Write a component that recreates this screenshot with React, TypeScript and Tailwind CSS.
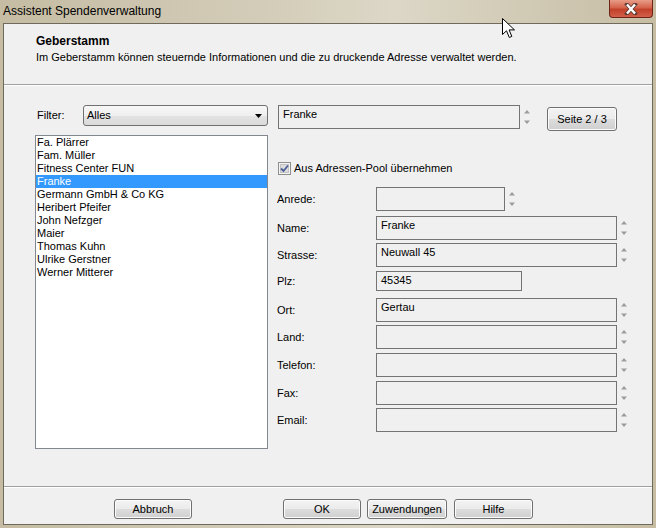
import React from "react";

const clients = [
  "Fa. Plärrer",
  "Fam. Müller",
  "Fitness Center FUN",
  "Franke",
  "Germann GmbH & Co KG",
  "Heribert Pfeifer",
  "John Nefzger",
  "Maier",
  "Thomas Kuhn",
  "Ulrike Gerstner",
  "Werner Mitterer",
];

type Field = {
  label: string;
  value: string;
  width: number;
  height: number;
  gap: number;
  spin: boolean;
};

// gap = space above the box (px)
const fields: Field[] = [
  { label: "Anrede:", value: "", width: 129, height: 24, gap: 12, spin: true },
  { label: "Name:", value: "Franke", width: 241, height: 24, gap: 5, spin: true },
  { label: "Strasse:", value: "Neuwall 45", width: 241, height: 24, gap: 3, spin: true },
  { label: "Plz:", value: "45345", width: 146, height: 20, gap: 4, spin: false },
  { label: "Ort:", value: "Gertau", width: 241, height: 24, gap: 7, spin: true },
  { label: "Land:", value: "", width: 241, height: 24, gap: 3, spin: true },
  { label: "Telefon:", value: "", width: 241, height: 24, gap: 4, spin: true },
  { label: "Fax:", value: "", width: 241, height: 24, gap: 4, spin: true },
  { label: "Email:", value: "", width: 241, height: 24, gap: 3, spin: true },
];

function Spinner() {
  return (
    <svg width="14" height="24" viewBox="0 0 14 24" className="shrink-0">
      <path d="M4 8.5 L7 5 L10 8.5 Z" fill="#9c9c9c" />
      <path d="M4 15.5 L7 19 L10 15.5 Z" fill="#9c9c9c" />
    </svg>
  );
}

function Button({ label, width }: { label: string; width: number }) {
  return (
    <div
      className="flex h-[20px] items-center justify-center rounded-[3px] border border-[#707070] bg-[linear-gradient(#f3f3f3_0%,#ebebeb_49%,#dddddd_50%,#cfcfcf_100%)] shadow-[inset_0_0_0_1px_#fcfcfc]"
      style={{ width }}
    >
      {label}
    </div>
  );
}

function Separator() {
  return (
    <div className="shrink-0">
      <div className="h-px bg-[#a0a0a0]" />
      <div className="h-px bg-white" />
    </div>
  );
}

export default function App() {
  return (
    <div className="relative h-[528px] w-[656px] overflow-hidden bg-[linear-gradient(90deg,#c5bca3_0%,#d3ccb8_40%,#dcd7c7_60%,#c6bda3_100%)] font-['Liberation_Sans',Arial,sans-serif] text-[11px] leading-[13px] text-black">
      {/* title bar */}
      <div className="flex h-[23px] items-center pl-[3px] text-[12px]">
        Assistent Spendenverwaltung
      </div>
      <div className="absolute right-[3px] top-0 flex h-[18px] w-[44px] items-center justify-center rounded-b-[4px] border border-t-0 border-[#6e2418] bg-[linear-gradient(#e79c88_0%,#d5634b_45%,#c2412a_55%,#d1604a_100%)]">
        <svg width="14" height="12" viewBox="0 0 14 12">
          <path
            d="M3 1.5 L11 10.5 M11 1.5 L3 10.5"
            stroke="#5a3a34"
            strokeWidth="4"
            strokeLinecap="square"
            fill="none"
          />
          <path
            d="M3 1.5 L11 10.5 M11 1.5 L3 10.5"
            stroke="#ffffff"
            strokeWidth="2.4"
            fill="none"
          />
        </svg>
      </div>

      {/* client area */}
      <div className="ml-[3px] flex h-[502px] w-[650px] flex-col border border-[#6f6a5c] bg-[#f0f0f0]">
        <div className="h-[60px] shrink-0 pl-[32px] pt-[10px]">
          <div className="text-[12px] font-bold leading-[14px]">Geberstamm</div>
          <div className="mt-[3px]">
            Im Geberstamm können steuernde Informationen und die zu druckende Adresse verwaltet werden.
          </div>
        </div>
        <Separator />

        <div className="flex flex-1 pl-[31px] pt-[19px]">
          {/* left column */}
          <div className="flex w-[233px] flex-col">
            <div className="flex h-[21px] items-center">
              <div className="w-[48px] pl-[2px]">Filter:</div>
              <div className="flex h-[21px] w-[185px] items-center justify-between rounded-[3px] border border-[#707070] bg-[linear-gradient(#f7f7f7_0%,#efefef_50%,#e3e3e3_51%,#dadada_100%)] pl-[3px] pr-[5px]">
                <span>Alles</span>
                <svg width="7" height="4" viewBox="0 0 7 4">
                  <path d="M0 0 H7 L3.5 4 Z" fill="#000" />
                </svg>
              </div>
            </div>
            <div className="mt-[9px] h-[314px] border border-[#828790] bg-white">
              {clients.map((c) => (
                <div
                  key={c}
                  className={
                    c === "Franke"
                      ? "h-[13px] bg-[#3399ff] pl-[1px] text-white"
                      : "h-[13px] pl-[1px]"
                  }
                >
                  {c}
                </div>
              ))}
            </div>
          </div>

          {/* right column */}
          <div className="ml-[9px] flex flex-col">
            <div className="flex h-[26px] items-start">
              <div className="ml-px h-[24px] w-[242px] border border-[#747474] pl-[4px] pt-[2px]">
                Franke
              </div>
              <Spinner />
              <div className="ml-[13px] mt-[2px] flex h-[24px] w-[70px] items-center justify-center rounded-[3px] border border-[#707070] bg-[linear-gradient(#f3f3f3_0%,#ebebeb_49%,#dddddd_50%,#cfcfcf_100%)] shadow-[inset_0_0_0_1px_#fcfcfc]">
                Seite 2 / 3
              </div>
            </div>

            <div className="mt-[31px] flex h-[13px] items-center">
              <svg width="13" height="13" viewBox="0 0 13 13" className="ml-px">
                <rect x="0.5" y="0.5" width="12" height="12" fill="#f4f4f4" stroke="#8e8f8f" />
                <rect x="2.5" y="2.5" width="8" height="8" fill="#dcdcdc" stroke="#c3c3c3" />
                <path d="M3 6.5 L5.5 9 L10 3.5" stroke="#4a5f97" strokeWidth="1.8" fill="none" />
              </svg>
              <span className="ml-[3px]">Aus Adressen-Pool übernehmen</span>
            </div>

            {fields.map((f) => (
              <div key={f.label} className="flex items-center" style={{ marginTop: f.gap }}>
                <div className="w-[99px]">{f.label}</div>
                <div
                  className="border border-[#747474] pl-[4px] pt-[2px]"
                  style={{ width: f.width, height: f.height }}
                >
                  {f.value}
                </div>
                {f.spin && <Spinner />}
              </div>
            ))}
          </div>
        </div>

        <Separator />
        <div className="flex h-[36px] shrink-0 pt-[11px]">
          <div className="ml-[110px]">
            <Button label="Abbruch" width={78} />
          </div>
          <div className="ml-[91px]">
            <Button label="OK" width={78} />
          </div>
          <div className="ml-[6px]">
            <Button label="Zuwendungen" width={80} />
          </div>
          <div className="ml-[7px]">
            <Button label="Hilfe" width={79} />
          </div>
        </div>
      </div>

      {/* mouse pointer */}
      <svg
        width="14"
        height="22"
        viewBox="0 0 14 22"
        className="absolute left-[502px] top-[18px]"
      >
        <path
          d="M0.5 0.5 L0.5 16.5 L4.5 12.8 L7.3 19.5 L9.8 18.4 L7.1 11.9 L12.5 11.9 Z"
          fill="#fff"
          stroke="#000"
          strokeWidth="1"
          strokeLinejoin="round"
        />
      </svg>
    </div>
  );
}
